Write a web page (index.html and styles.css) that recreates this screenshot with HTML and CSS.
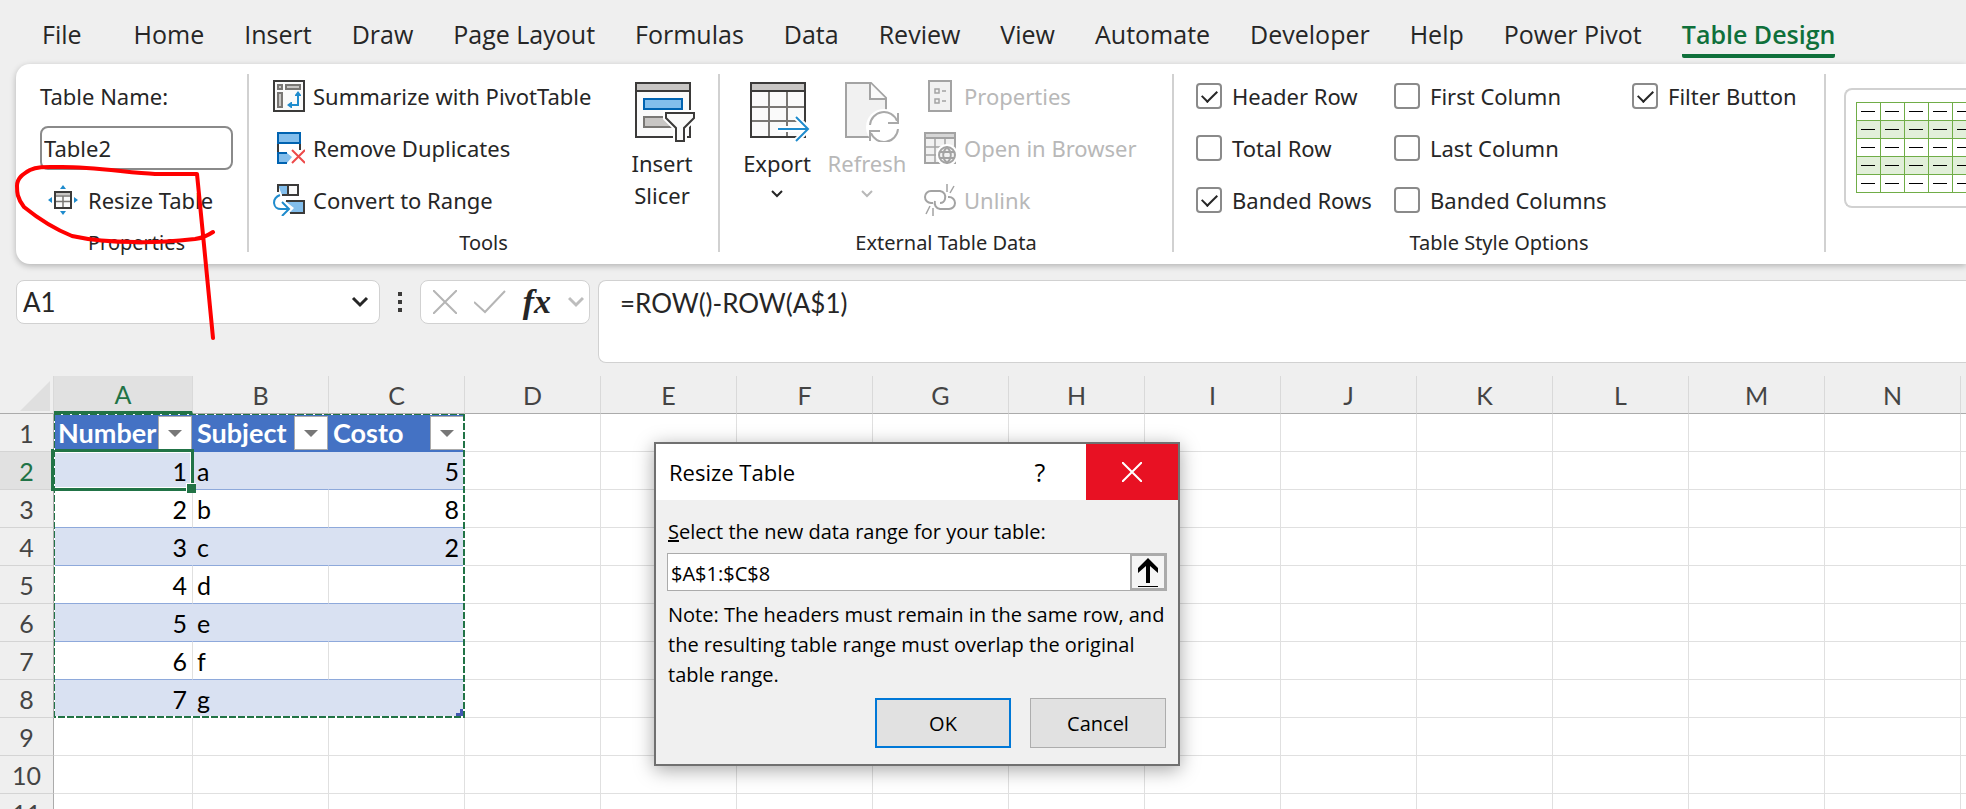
FILE: index.html
```
<!DOCTYPE html>
<html lang="en">
<head>
  <meta charset="UTF-8">
  <meta name="viewport" content="width=device-width, initial-scale=1">
  <title>Resize Table</title>
  <link rel="stylesheet" href="styles.css">
</head>
<body>
  <nav class="tabs">
    <a class="tab tab-file" href="#">File</a>
    <a class="tab" href="#">Home</a>
    <a class="tab" href="#">Insert</a>
    <a class="tab" href="#">Draw</a>
    <a class="tab" href="#">Page Layout</a>
    <a class="tab" href="#">Formulas</a>
    <a class="tab" href="#">Data</a>
    <a class="tab" href="#">Review</a>
    <a class="tab" href="#">View</a>
    <a class="tab" href="#">Automate</a>
    <a class="tab" href="#">Developer</a>
    <a class="tab" href="#">Help</a>
    <a class="tab" href="#">Power Pivot</a>
    <a class="tab active" href="#">Table Design</a>
  </nav>

  <div class="ribbon">
    <section class="group group-properties">
      <div class="rows">
        <label class="table-name-label" for="tableName">Table Name:</label>
        <input class="table-name" id="tableName" type="text" value="Table2">
        <button class="command resize" type="button">
          <svg width="30" height="30" viewBox="0 0 30 30">
            <path d="M7 7h16v16H7z" fill="#fafafa"/>
            <path d="M7 7h16v3H7z" fill="#c8c6c4"/>
            <path d="M15 11v12M7 16.500h16M7 11h16" stroke="#797774" stroke-width="1.500" fill="none"/>
            <path d="M7 7h16v16H7z" stroke="#3b3a39" stroke-width="2" fill="none"/>
            <path d="M12 4l3-4 3 4zM12 26l3 4 3-4zM4 12l-4 3 4 3zM26 12l4 3-4 3z" fill="#1e8bcd"/>
          </svg>
          <span>Resize Table</span>
        </button>
      </div>
      <div class="group-label">Properties</div>
    </section>
    <div class="divider"></div>

    <section class="group group-tools">
      <div class="group-body">
        <div class="rows">
          <button class="command" type="button">
            <svg width="32" height="32" viewBox="0 0 32 32">
              <path d="M1 1h30v30H1z" fill="#fafafa" stroke="#3b3a39" stroke-width="2"/>
              <path d="M5 5h4v4H5zM13 5h14v4H13zM5 13h4v14H5z" fill="#c8c6c4" stroke="#797774" stroke-width="2"/>
              <path d="M25 14v11h-9" stroke="#1e8bcd" stroke-width="2" fill="none"/>
              <path d="M22 16v-1l3-4 3 4v1zM19 22h-1l-4 3 4 3h1z" fill="#1e8bcd"/>
            </svg>
            <span>Summarize with PivotTable</span>
          </button>
          <button class="command" type="button">
            <svg width="32" height="32" viewBox="0 0 32 32">
              <path d="M5 11v10M27 11v7" stroke="#3b3a39" stroke-width="2"/>
              <path d="M5 1h22v10H5z" fill="#83beec" stroke="#0063b1" stroke-width="2"/>
              <path d="M5 21h9l5 4-5 6H5z" fill="#83beec"/>
              <path d="M14 31H5V21h9" fill="none" stroke="#0063b1" stroke-width="2"/>
              <path d="M19 18l13 13M32 18L19 31" stroke="#ed4a4a" stroke-width="2"/>
            </svg>
            <span>Remove Duplicates</span>
          </button>
          <button class="command" type="button">
            <svg width="32" height="32" viewBox="0 0 32 32">
              <path d="M5 1h20v10H5z" fill="#fafafa"/>
              <path d="M5 1h9v10H9z" fill="#83beec"/>
              <path d="M5 8V1h20v10H9M15 1v10" fill="none" stroke="#3b3a39" stroke-width="2"/>
              <path d="M12 17h19v12H16l5-5z" fill="#83beec"/>
              <path d="M13 17h18v12H17" fill="none" stroke="#3b3a39" stroke-width="2"/>
              <path d="M7 11C-2 15 0 25 8 25h7M9 18l7 7-7 7" fill="none" stroke="#fff" stroke-width="5"/>
              <path d="M7 11C-2 15 0 25 8 25h7M9 18l7 7-7 7" fill="none" stroke="#1e8bcd" stroke-width="2"/>
            </svg>
            <span>Convert to Range</span>
          </button>
        </div>
        <button class="big slicer" type="button">
          <svg class="big-icon" width="60" height="60" viewBox="0 0 60 60">
            <path d="M1 1h54v54H1z" fill="#fafafa"/>
            <path d="M1 1h54v8H1z" fill="#c8c6c4"/>
            <path d="M1 1h54v54H1zM1 9h54" fill="none" stroke="#3b3a39" stroke-width="2"/>
            <path d="M9 17h38v10H9z" fill="#83beec" stroke="#0063b1" stroke-width="2"/>
            <path d="M9 35h28v10H9z" fill="#c8c6c4" stroke="#797774" stroke-width="2"/>
            <path d="M31 31h28v5l-10 10v13h-8V46L31 36z" fill="#fff" stroke="#fff" stroke-width="6"/>
            <path d="M31 31h28v5l-10 10v13h-8V46L31 36z" fill="#fafafa" stroke="#3b3a39" stroke-width="2"/>
          </svg>
          <span>Insert<br>Slicer</span>
        </button>
      </div>
      <div class="group-label">Tools</div>
    </section>
    <div class="divider"></div>

    <section class="group group-external">
      <div class="group-body">
        <button class="big export" type="button">
          <svg class="big-icon" width="60" height="60" viewBox="0 0 60 60">
            <path d="M1 1h54v54H1z" fill="#fafafa"/>
            <path d="M1 1h54v8H1z" fill="#c8c6c4"/>
            <path d="M19 9v46M37 9v46M1 25h54M1 39h54" stroke="#797774" stroke-width="2"/>
            <path d="M1 1h54v54H1zM1 9h54" fill="none" stroke="#3b3a39" stroke-width="2"/>
            <path d="M28 47h30M46 35l12 12-12 12" fill="none" stroke="#fff" stroke-width="6"/>
            <path d="M28 47h30M46 35l12 12-12 12" fill="none" stroke="#1e8bcd" stroke-width="2"/>
          </svg>
          <span>Export</span>
          <svg class="chevron" width="12" height="8" viewBox="0 0 12 8"><path d="M1 1l5 5 5-5" fill="none" stroke="#262626" stroke-width="2"/></svg>
        </button>
        <button class="big" type="button" disabled>
          <svg class="big-icon" width="60" height="60" viewBox="-2 0 60 60">
            <path d="M4 1h25l15 15v39H4z" fill="#f1f1f1" stroke="#a3a3a3" stroke-width="2"/>
            <path d="M28 1v16h16" fill="#fafafa" stroke="#a3a3a3" stroke-width="2"/>
            <circle cx="42" cy="45" r="18" fill="#fff"/>
            <path d="M28 43a14 14 0 0 1 27-4M56 47a14 14 0 0 1-27 4" fill="none" stroke="#a9a9a9" stroke-width="2"/>
            <path d="M56 31v10H46M28 59V49h10" fill="none" stroke="#a9a9a9" stroke-width="2"/>
          </svg>
          <span>Refresh</span>
          <svg class="chevron" width="12" height="8" viewBox="0 0 12 8"><path d="M1 1l5 5 5-5" fill="none" stroke="#b8b8b8" stroke-width="2"/></svg>
        </button>
        <div class="rows">
          <button class="command" type="button" disabled>
            <svg width="32" height="32" viewBox="0 0 32 32" fill="none" stroke="#a3a3a3" stroke-width="2">
              <path d="M5 1h22v30H5z" fill="#f1f1f1"/>
              <path d="M11 9h4v4h-4zM11 19h4v4h-4zM18 11h4M18 21h4" stroke-width="1.500"/>
            </svg>
            <span>Properties</span>
          </button>
          <button class="command" type="button" disabled>
            <svg width="32" height="32" viewBox="0 0 32 32" fill="none" stroke="#a3a3a3" stroke-width="2">
              <path d="M1 1h30v30H1z" fill="#f1f1f1"/>
              <path d="M1 1h30v5H1z" fill="#d6d6d6"/>
              <path d="M11 6v25M21 6v25M1 15h30M1 23h30" stroke-width="1.500"/>
              <circle cx="23" cy="23" r="11" fill="#fff" stroke="none"/>
              <circle cx="23" cy="23" r="8" fill="#f1f1f1"/>
              <path d="M16 20h14M16 26h14M23 15c-5 5-5 11 0 16c5-5 5-11 0-16"/>
            </svg>
            <span>Open in Browser</span>
          </button>
          <button class="command" type="button" disabled>
            <svg width="32" height="32" viewBox="0 0 32 32" fill="none" stroke="#a3a3a3" stroke-width="2">
              <path d="M9 19H7a6 6 0 0 1 0-12h9a6 6 0 0 1 5 8q-1 4-5 4"/>
              <path d="M24 13h1a6 6 0 0 1 0 12h-9a6 6 0 0 1-5-8"/>
              <path d="M23 0v8M30 2l-4 7M9 24v8M6 22l-4 8" stroke-width="1.500"/>
            </svg>
            <span>Unlink</span>
          </button>
        </div>
      </div>
      <div class="group-label">External Table Data</div>
    </section>
    <div class="divider"></div>

    <section class="group group-options">
      <div class="options">
        <label class="option"><input type="checkbox" checked>Header Row</label>
        <label class="option"><input type="checkbox">First Column</label>
        <label class="option"><input type="checkbox" checked>Filter Button</label>
        <label class="option"><input type="checkbox">Total Row</label>
        <label class="option option-wide"><input type="checkbox">Last Column</label>
        <label class="option"><input type="checkbox" checked>Banded Rows</label>
        <label class="option option-wide"><input type="checkbox">Banded Columns</label>
      </div>
      <div class="group-label">Table Style Options</div>
    </section>
    <div class="divider"></div>

    <button class="gallery" type="button" aria-label="Table style">
      <svg width="145" height="91" viewBox="0 0 145 91">
        <defs>
          <pattern id="styleRows" width="24" height="36" patternUnits="userSpaceOnUse">
            <path d="M0 0h24v18H0z" fill="#fff"/>
            <path d="M0 18h24v18H0z" fill="#e2efda"/>
            <path d="M0 .5h24M0 18.500h24M.5 0v36" stroke="#70ad47"/>
            <path d="M5 9.500h14M5 27.500h14" stroke="#000"/>
          </pattern>
        </defs>
        <path d="M0 0h145v91H0z" fill="url(#styleRows)"/>
        <path d="M0 90.500h145" stroke="#70ad47"/>
      </svg>
    </button>
  </div>

  <div class="formula-bar">
    <div class="name-box">
      <input type="text" value="A1" aria-label="Name box">
      <svg width="18" height="12" viewBox="0 0 18 12"><path d="M2 2l7 7 7-7" fill="none" stroke="#262626" stroke-width="3"/></svg>
    </div>
    <svg class="grip" width="4" height="20" viewBox="0 0 4 20"><path d="M0 0h4v4H0zM0 8h4v4H0zM0 16h4v4H0z" fill="#3b3a39"/></svg>
    <div class="fx-box">
      <button type="button" aria-label="Cancel entry">
        <svg width="24" height="24" viewBox="0 0 24 24"><path d="M0 0l24 24M24 0L0 24" stroke="#b5b5b5" stroke-width="2"/></svg>
      </button>
      <button type="button" aria-label="Enter">
        <svg width="32" height="24" viewBox="0 0 32 24"><path d="M0 12l11 10L31 1" fill="none" stroke="#b5b5b5" stroke-width="2"/></svg>
      </button>
      <button class="fx" type="button">fx</button>
      <svg width="16" height="12" viewBox="0 0 16 12"><path d="M1 2l7 7 7-7" fill="none" stroke="#bdbdbd" stroke-width="3"/></svg>
    </div>
    <textarea class="formula" aria-label="Formula">=ROW()-ROW(A$1)</textarea>
  </div>

  <main class="sheet">
    <table class="grid">
      <colgroup>
        <col class="col-head">
        <col class="col-a">
        <col span="13">
        <col>
      </colgroup>
      <thead>
        <tr>
          <th class="corner"><svg width="30" height="30" viewBox="0 0 30 30"><path d="M30 0v30H0z" fill="#dfdfdf"/></svg></th>
          <th class="selected">A</th><th>B</th><th>C</th><th>D</th><th>E</th><th>F</th><th>G</th><th>H</th><th>I</th><th>J</th><th>K</th><th>L</th><th>M</th><th>N</th><th></th>
        </tr>
      </thead>
      <tbody>
        <tr class="title-row">
          <th>1</th>
          <td><div class="title">Number<button class="filter" type="button" aria-label="Filter Number"></button></div></td>
          <td><div class="title">Subject<button class="filter" type="button" aria-label="Filter Subject"></button></div></td>
          <td><div class="title">Costo<button class="filter" type="button" aria-label="Filter Costo"></button></div></td>
          <td></td><td></td><td></td><td></td><td></td><td></td><td></td><td></td><td></td><td></td><td></td><td></td>
        </tr>
        <tr class="band">
          <th class="selected">2</th><td class="number active-cell">1</td><td>a</td><td class="number">5</td>
          <td></td><td></td><td></td><td></td><td></td><td></td><td></td><td></td><td></td><td></td><td></td><td></td>
        </tr>
        <tr class="plain">
          <th>3</th><td class="number">2</td><td>b</td><td class="number">8</td>
          <td></td><td></td><td></td><td></td><td></td><td></td><td></td><td></td><td></td><td></td><td></td><td></td>
        </tr>
        <tr class="band">
          <th>4</th><td class="number">3</td><td>c</td><td class="number">2</td>
          <td></td><td></td><td></td><td></td><td></td><td></td><td></td><td></td><td></td><td></td><td></td><td></td>
        </tr>
        <tr class="plain">
          <th>5</th><td class="number">4</td><td>d</td><td></td>
          <td></td><td></td><td></td><td></td><td></td><td></td><td></td><td></td><td></td><td></td><td></td><td></td>
        </tr>
        <tr class="band">
          <th>6</th><td class="number">5</td><td>e</td><td></td>
          <td></td><td></td><td></td><td></td><td></td><td></td><td></td><td></td><td></td><td></td><td></td><td></td>
        </tr>
        <tr class="plain">
          <th>7</th><td class="number">6</td><td>f</td><td></td>
          <td></td><td></td><td></td><td></td><td></td><td></td><td></td><td></td><td></td><td></td><td></td><td></td>
        </tr>
        <tr class="band">
          <th>8</th><td class="number">7</td><td>g</td><td class="table-end"></td>
          <td></td><td></td><td></td><td></td><td></td><td></td><td></td><td></td><td></td><td></td><td></td><td></td>
        </tr>
        <tr>
          <th>9</th><td></td><td></td><td></td>
          <td></td><td></td><td></td><td></td><td></td><td></td><td></td><td></td><td></td><td></td><td></td><td></td>
        </tr>
        <tr>
          <th>10</th><td></td><td></td><td></td>
          <td></td><td></td><td></td><td></td><td></td><td></td><td></td><td></td><td></td><td></td><td></td><td></td>
        </tr>
        <tr>
          <th>11</th><td></td><td></td><td></td>
          <td></td><td></td><td></td><td></td><td></td><td></td><td></td><td></td><td></td><td></td><td></td><td></td>
        </tr>
      </tbody>
    </table>

    <!-- marching ants round A1:C8 -->
    <svg class="ants" width="411" height="304" viewBox="0 0 411 304">
      <path d="M0 .5h411M.5 0v304" fill="none" stroke="#fff"/>
      <path d="M410 0v303H0" fill="none" stroke="#fff" stroke-width="2"/>
      <path d="M0 .5h411M.5 0v304" fill="none" stroke="#217346" stroke-dasharray="7 2"/>
      <path d="M410 0v303H0" fill="none" stroke="#217346" stroke-width="2" stroke-dasharray="7 2"/>
    </svg>

    <div class="dialog" role="dialog" aria-labelledby="dialogTitle">
      <div class="dialog-bar">
        <h1 id="dialogTitle">Resize Table</h1>
        <button class="help" type="button">?</button>
        <button class="close" type="button" aria-label="Close">
          <svg width="20" height="20" viewBox="0 0 20 20"><path d="M0 0l20 20M20 0L0 20" stroke="#fff" stroke-width="2"/></svg>
        </button>
      </div>
      <form class="dialog-body">
        <label for="range"><u>S</u>elect the new data range for your table:</label>
        <div class="range">
          <input id="range" type="text" value="$A$1:$C$8">
          <button type="button" aria-label="Collapse dialog">
            <svg width="20" height="29" viewBox="0 0 20 29"><path d="M10 0l10 10v5l-8-7v17H8V8l-8 7v-5zM0 28h20v1H0z" fill="#000"/></svg>
          </button>
        </div>
        <p>Note: The headers must remain in the same row, and the resulting table range must overlap the original table range.</p>
        <div class="dialog-buttons">
          <button class="ok" type="button">OK</button>
          <button type="button">Cancel</button>
        </div>
      </form>
    </div>
  </main>

  <!-- hand-drawn pen mark -->
  <svg class="pen" width="220" height="345" viewBox="0 0 220 345">
    <path d="M213 232C207 236 203 238 195 239C175 241 155 243 135 242C110 242 90 240 72 236C57 230 40 220 24 207C17 198 17 192 17 186C17 178 23 174 30 170C38 166 48 167 62 167C95 167 130 173 155 174H197L204 245L213 338" fill="none" stroke="#f00" stroke-width="4" stroke-linecap="round" stroke-linejoin="round"/>
  </svg>
</body>
</html>
```

FILE: styles.css
```
* {
  box-sizing: border-box;
}
body {
  margin: 0;
  height: 100vh;
  overflow: hidden;
  display: flex;
  flex-direction: column;
  position: relative;
  background-color: #efefef;
  color: #262626;
  font-family: "Noto Sans", "Open Sans", sans-serif;
  font-size: 22px;
}
button, input, textarea {
  font: inherit;
  color: inherit;
  margin: 0;
  padding: 0;
}
button {
  background: none;
  border: none;
}
svg {
  flex: none;
  display: block;
}

/* tabs */
.tabs {
  display: flex;
  gap: 40px;
  height: 64px;
  padding: 14px 42px 0;
}
.tab {
  height: 44px;
  color: #262626;
  text-decoration: none;
  white-space: nowrap;
  font-family: "Open Sans", "Noto Sans", sans-serif;
  font-size: 25px;
  line-height: 40px;
}
.tab-file {
  margin-right: 12px;
}
.tab.active {
  color: #0f703b;
  font-weight: 600;
  border-bottom: 4px solid #0f703b;
  border-radius: 2px;
}

/* ribbon */
.ribbon {
  display: flex;
  flex: none;
  margin-left: 16px;
  padding: 6px 0;
  background-color: #fff;
  border-radius: 14px 0 0 14px;
  box-shadow: 0 2px 6px rgba(0, 0, 0, 0.25);
}
.divider {
  flex: none;
  width: 2px;
  margin: 4px 0 6px;
  background-color: #d1d1d1;
}
.group {
  flex: none;
  display: flex;
  flex-direction: column;
}
.group-properties {
  width: 231px;
  padding: 0 14px 0 24px;
}
.group-tools {
  width: 469px;
}
.group-external {
  width: 452px;
}
.group-options {
  width: 650px;
}
.group-body {
  display: flex;
}
.group-label {
  margin-top: 2px;
  text-align: center;
  font-size: 20px;
  line-height: 30px;
}
.rows {
  display: grid;
  grid-template-rows: repeat(3, 52px);
  align-items: center;
}
.command {
  display: flex;
  align-items: center;
  gap: 8px;
  white-space: nowrap;
}
.command:disabled, .big:disabled {
  color: #b8b8b8;
}
.resize {
  gap: 10px;
  padding-left: 8px;
}
.table-name {
  width: 100%;
  height: 44px;
  padding: 0 2px;
  border: 2px solid #8a8a8a;
  border-radius: 8px;
  background-color: #fff;
}
.group-tools .rows {
  width: 368px;
  padding-left: 24px;
}
.big {
  display: flex;
  flex-direction: column;
  align-items: center;
  gap: 5px;
  padding-top: 12px;
  line-height: 32px;
}
.big-icon {
  margin-left: 6px;
}
.chevron {
  margin-top: 6px;
}
.slicer {
  width: 90px;
}
.export {
  margin-left: 12px;
}
.group-external .big {
  width: 90px;
}
.group-external .rows {
  padding-left: 12px;
}
.options {
  display: grid;
  grid-template-columns: 198px 238px auto;
  grid-template-rows: repeat(3, 52px);
  padding-left: 22px;
}
.option {
  display: flex;
  align-items: center;
  gap: 10px;
  white-space: nowrap;
}
.option-wide {
  grid-column: 2 / 4;
}
.option input {
  appearance: none;
  display: grid;
  place-items: center;
  width: 26px;
  height: 26px;
  border: 2px solid #8a8a8a;
  border-radius: 4px;
  background-color: #fff;
}
.option input:checked::after {
  content: "";
  width: 13px;
  height: 7px;
  margin-bottom: 4px;
  border-left: 2px solid #262626;
  border-bottom: 2px solid #262626;
  transform: rotate(-45deg);
}
.gallery {
  flex: 1;
  min-width: 0;
  height: 120px;
  margin: 18px 0 0 18px;
  padding: 12px 0 0 10px;
  overflow: hidden;
  border: 2px solid #d1d1d1;
  border-right: none;
  border-radius: 8px 0 0 8px;
  display: flex;
}

/* formula bar */
.formula-bar {
  flex: none;
  display: flex;
  align-items: flex-start;
  height: 112px;
  padding: 16px 0 0 16px;
  font-family: Lato, sans-serif;
  font-size: 26px;
}
.name-box, .fx-box, .formula {
  border: 1px solid #d1d1d1;
  border-radius: 8px;
  background-color: #fff;
}
.name-box {
  display: flex;
  align-items: center;
  width: 364px;
  height: 44px;
  padding: 0 10px 0 6px;
}
.name-box input {
  flex: 1;
  min-width: 0;
  border: none;
}
.grip {
  margin: 12px 18px;
}
.fx-box {
  display: flex;
  align-items: center;
  justify-content: space-between;
  width: 170px;
  height: 44px;
  padding: 0 5px 0 12px;
}
.fx {
  font-family: "Liberation Serif", serif;
  font-style: italic;
  font-weight: bold;
  font-size: 34px;
  line-height: 40px;
}
.formula {
  flex: 1;
  height: 83px;
  margin-left: 8px;
  padding: 6px 21px;
  border-right: none;
  border-radius: 8px 0 0 8px;
  line-height: 32px;
  resize: none;
}

/* sheet */
.sheet {
  flex: 1;
  min-height: 0;
  position: relative;
  overflow: hidden;
  font-family: Lato, sans-serif;
  font-size: 25px;
}
.grid {
  table-layout: fixed;
  width: 2097px;
  border-collapse: separate;
  border-spacing: 0;
  background-color: #fff;
}
.col-head {
  width: 54px;
}
.col-a {
  width: 139px;
}
.grid th, .grid td {
  height: 38px;
  padding: 1px 5px 0 4px;
  line-height: 34px;
  border-right: 1px solid #e0e0e0;
  border-bottom: 1px solid #e0e0e0;
  color: #000;
  white-space: nowrap;
}
.grid th {
  padding: 1px 0 0;
  background-color: #efefef;
  border-color: #d4d4d4;
  color: #444;
  font-weight: normal;
}
.grid thead th {
  border-bottom-color: #ababab;
  border-right-color: #d9d9d9;
}
.grid tbody th {
  border-right-color: #ababab;
}
.grid .corner {
  padding: 3px 0 0 20px;
}
.grid th.selected {
  background-color: #e1e1e1;
  color: #217346;
}
.grid thead th.selected {
  border-bottom: 3px solid #217346;
}
.grid .number {
  text-align: right;
}
.grid .title-row td:nth-child(-n+4) {
  padding-right: 1px;
  background-color: #4472c4;
  border-color: #4472c4;
}
.title {
  display: flex;
  align-items: center;
  justify-content: space-between;
  height: 34px;
  color: #fff;
  font-size: 27px;
  font-weight: bold;
}
.filter {
  flex: none;
  display: grid;
  place-items: center;
  width: 34px;
  height: 34px;
  margin-right: -1px;
  border: 1px solid #ababab;
  background-color: #fff;
}
.filter::before {
  content: "";
  border: 7px solid transparent;
  border-top-color: #777;
  border-bottom: none;
}
.grid .band td:nth-child(-n+4) {
  background-color: #d9e1f2;
  border-right-color: #d9e1f2;
  border-bottom-color: #8ea9db;
}
.grid .plain td:nth-child(-n+4) {
  border-bottom-color: #8ea9db;
}
.active-cell {
  position: relative;
}
.active-cell::before {
  content: "";
  position: absolute;
  inset: -3px -2px -2px -3px;
  border: 3px solid #217346;
  box-shadow: inset 0 0 0 1px #fff;
}
.active-cell::after {
  content: "";
  position: absolute;
  right: -4px;
  bottom: -4px;
  width: 9px;
  height: 9px;
  border: 1px solid #fff;
  border-right: none;
  border-bottom: none;
  background-color: #217346;
}
.grid .band .table-end {
  background-image: linear-gradient(#4257b2, #4257b2), linear-gradient(#4257b2, #4257b2);
  background-size: 8px 4px, 4px 8px;
  background-position: right bottom;
  background-repeat: no-repeat;
}
.ants {
  position: absolute;
  left: 54px;
  top: 38px;
}

/* dialog */
.dialog {
  position: absolute;
  left: 654px;
  top: 66px;
  width: 526px;
  border: 2px solid #707070;
  background-color: #f0f0f0;
  box-shadow: 0 4px 18px rgba(0, 0, 0, 0.35);
  color: #000;
  font-family: "Open Sans", "Noto Sans", sans-serif;
  font-size: 20px;
}
.dialog-bar {
  display: flex;
  align-items: center;
  height: 56px;
  padding-left: 13px;
  background-color: #fff;
}
.dialog-bar h1 {
  flex: 1;
  margin: 0;
  font-size: 22px;
  font-weight: normal;
}
.help {
  width: 92px;
  font-size: 25px;
}
.close {
  display: grid;
  place-items: center;
  width: 92px;
  height: 56px;
  background-color: #e81123;
}
.dialog-body {
  padding: 17px 12px 16px;
}
.dialog-body label {
  display: block;
  line-height: 30px;
}
.range {
  display: flex;
  height: 38px;
  margin: 6px -1px 9px;
  border: 1px solid #ababab;
  background-color: #fff;
}
.range input {
  flex: 1;
  min-width: 0;
  padding: 2px 3px 0;
  border: none;
}
.range button {
  display: grid;
  place-items: center;
  width: 36px;
  border: 2px solid #ababab;
  background-color: #f5f5f5;
}
.dialog-body p {
  margin: 0 -6px 0 0;
  line-height: 30px;
}
.dialog-buttons {
  display: flex;
  justify-content: flex-end;
  gap: 19px;
  margin-top: 8px;
}
.dialog-buttons button {
  width: 136px;
  height: 50px;
  border: 1px solid #adadad;
  background-color: #e1e1e1;
}
.dialog-buttons .ok {
  border: 2px solid #0078d7;
}

.pen {
  position: absolute;
  left: 0;
  top: 0;
  pointer-events: none;
}
```
